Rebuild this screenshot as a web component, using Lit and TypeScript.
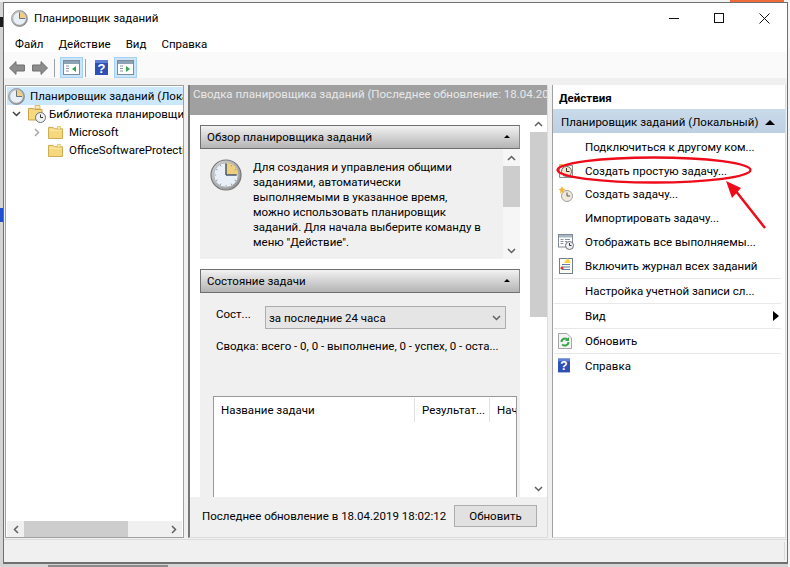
import { LitElement, html, css, svg } from "lit";
import { customElement } from "lit/decorators.js";

const ticks = [0, 30, 60, 90, 120, 150, 180, 210, 240, 270, 300, 330];
const clock = (s: number) => html`<svg width=${s} height=${s} viewBox="0 0 32 32" class="ic">
  <defs><linearGradient id="rim" x1="0" y1="0" x2="1" y2="1"><stop offset="0" stop-color="#d8d8d8"/><stop offset="1" stop-color="#8c8c8c"/></linearGradient></defs>
  <circle cx="16" cy="16" r="15" fill="url(#rim)" stroke="#767676" stroke-width="1.2"/>
  <circle cx="16" cy="16" r="12.200" fill="#e9eff6" stroke="#a8aeb4" stroke-width=".8"/>
  <path d="M16 16V3.800A12.200 12.200 0 0 1 28.200 16Z" fill="#efcf7f"/>
  ${s > 20 ? ticks.map((a) => svg`<path d="M16 4.500v1.600" transform="rotate(${a} 16 16)" stroke="#8a98a8" stroke-width=".8"/>`) : ""}
  <path d="M16 16V4.500M16 16H26.500" stroke="#44596f" stroke-width="1.500" fill="none"/>
</svg>`;

const folder = () => html`<svg width="15" height="13" viewBox="0 0 16 14" class="ic">
  <path d="M.5 1.500h5l1.500 1.500h8.500v10.500h-15z" fill="#f6d87f" stroke="#c9a548"/>
  <path d="M1.500 4.500h13" stroke="#fff0b8"/>
  <path d="M10 .5h3.500v3h-3.500z" fill="#fbe9ad" stroke="#d6b65c" stroke-width=".7"/>
</svg>`;

const arrow = (flip: boolean) => html`<svg width="16" height="14" viewBox="0 0 16 14" class="ic">
  <path d=${flip ? "M15.500 7L9 .6V4H.6v6H9v3.400z" : "M.5 7L7 .6V4h8.400v6H7v3.400z"} fill="#8d8d8d" stroke="#6e6e6e"/>
</svg>`;

const pane = (right: boolean) => html`<svg width="17" height="15" viewBox="0 0 17 15" class="ic">
  <rect x=".5" y=".5" width="16" height="14" fill="#fff" stroke="#7b8b99"/>
  <rect x="1" y="1" width="15" height="3" fill="#8da2b5"/>
  <path d="M3 6h3M3 8.500h3M3 11h3" stroke="#8794a0"/>
  <path d=${right ? "M9 6l4 3-4 3z" : "M13 6l-4 3 4 3z"} fill="#36a84a"/>
</svg>`;

const help = (w: number, h: number) => html`<svg width=${w} height=${h} viewBox="0 0 13 15" class="ic">
  <rect width="13" height="15" fill="#2f4fb5"/>
  <path d="M0 0h13v3H0z" fill="#5f7fd4"/>
  <text x="6.500" y="12.500" text-anchor="middle" font-family="Liberation Sans, sans-serif" font-weight="700" font-size="13" fill="#fff">?</text>
</svg>`;

const icFolderClock = html`<svg width="18" height="18" viewBox="0 0 18 18" class="ic">
  <path d="M.5 3.500h5l1 1h7.500v10.500H.5z" fill="#f6d87f" stroke="#c9a548"/>
  <path d="M7 .5h5v3.500H7z" fill="#fbe9ad" stroke="#c9a548" stroke-width=".7"/>
  <circle cx="12.500" cy="12.500" r="5" fill="#eef1f3" stroke="#6f6f6f"/>
  <path d="M12.500 9.500v3h2.500" stroke="#333" fill="none"/>
</svg>`;

const icSimple = html`<svg width="16" height="16" viewBox="0 0 16 16" class="ic">
  <path d="M1.500 2.500h13v12h-13z" fill="#f2f2f2" stroke="#8b8b8b"/>
  <circle cx="8.500" cy="8.500" r="5" fill="#f3e7c8" stroke="#6e6e6e"/>
  <path d="M8.500 5v3.500h3" stroke="#333" fill="none"/>
  <path d="M1 1h4v2H1z" fill="#eab54a"/>
</svg>`;

const icTask = html`<svg width="16" height="16" viewBox="0 0 16 16" class="ic">
  <circle cx="9" cy="10" r="5.500" fill="#f0eadb" stroke="#a0a0a0"/>
  <path d="M9 6.500V10h3" stroke="#555" fill="none"/>
  <path d="M4 0l1 2.500 2.500.5L5.500 4.800 6 7.500 4 6 2 7.500l.5-2.700L.5 3 3 2.500z" fill="#f2b632"/>
</svg>`;

const icRunning = html`<svg width="16" height="16" viewBox="0 0 16 16" class="ic">
  <rect x=".5" y=".5" width="14" height="12.500" fill="#fff" stroke="#7f8a96"/>
  <rect x="1" y="1" width="13" height="2.500" fill="#a9b7c5"/>
  <path d="M2.500 5.500h3M2.500 7.500h3M2.500 9.500h3M7 5.500h5M7 7.500h2" stroke="#8794a0"/>
  <circle cx="11.500" cy="11.500" r="4" fill="#eef1f3" stroke="#6f6f6f"/>
  <path d="M11.500 9v2.500h2" stroke="#333" fill="none"/>
</svg>`;

const icLog = html`<svg width="16" height="16" viewBox="0 0 16 16" class="ic">
  <rect x="1.500" y=".5" width="13" height="15" fill="#fdfdf3" stroke="#6f7f90"/>
  <path d="M4 6.500h8M4 9h8M4 11.500h8" stroke="#5b7db0"/>
  <path d="M9.500 0l3.500 5H6z" fill="#f7d23c"/>
  <circle cx="4" cy="10" r="1.600" fill="#d23a3a"/>
</svg>`;

const icRefresh = html`<svg width="14" height="16" viewBox="0 0 14 16" class="ic">
  <path d="M.5.5h8.500l4.500 4.500v10.500H.5z" fill="#f4f4f4" stroke="#a5a5a5"/>
  <path d="M3.500 9a3.600 3.600 0 0 1 6.300-2.300" stroke="#3aa54a" stroke-width="2" fill="none"/>
  <path d="M10.500 9a3.600 3.600 0 0 1-6.300 2.300" stroke="#3aa54a" stroke-width="2" fill="none"/>
  <path d="M11 4v4H7z" fill="#3aa54a"/>
</svg>`;

const chevDown = html`<svg width="9" height="6" viewBox="0 0 9 6" class="ic"><path d="M1 1l3.500 3.500L8 1" fill="none" stroke="#606060" stroke-width="1.500"/></svg>`;
const chevDownDark = html`<svg width="9" height="6" viewBox="0 0 9 6" class="ic"><path d="M1 1l3.500 3.500L8 1" fill="none" stroke="#404040" stroke-width="1.500"/></svg>`;
const chevUp = html`<svg width="9" height="6" viewBox="0 0 9 6" class="ic"><path d="M1 5l3.500-3.500L8 5" fill="none" stroke="#606060" stroke-width="1.500"/></svg>`;
const chevL = html`<svg width="6" height="9" viewBox="0 0 6 9" class="ic"><path d="M5 1L1.500 4.500 5 8" fill="none" stroke="#606060" stroke-width="1.500"/></svg>`;
const chevR = html`<svg width="6" height="9" viewBox="0 0 6 9" class="ic"><path d="M1 1l3.500 3.500L1 8" fill="none" stroke="#a8a8a8" stroke-width="1.500"/></svg>`;
const chevRDark = html`<svg width="6" height="9" viewBox="0 0 6 9" class="ic"><path d="M1 1l3.500 3.500L1 8" fill="none" stroke="#606060" stroke-width="1.500"/></svg>`;

const scrollV = (thumbH: number, cls: string) => html`<div class="vbar ${cls}">
  <div class="sb-btn">${chevUp}</div>
  <div class="vtrack"><div class="vthumb" style="height:${thumbH}px"></div></div>
  <div class="sb-btn">${chevDown}</div>
</div>`;

const actions: [unknown, string, boolean, boolean][] = [
  [null, "Подключиться к другому ком...", false, false],
  [icSimple, "Создать простую задачу...", false, false],
  [icTask, "Создать задачу...", false, false],
  [null, "Импортировать задачу...", false, false],
  [icRunning, "Отображать все выполняемы...", false, false],
  [icLog, "Включить журнал всех заданий", false, false],
  [null, "Настройка учетной записи сл...", true, false],
  [null, "Вид", true, true],
  [icRefresh, "Обновить", true, false],
  [help(12, 15), "Справка", true, false],
];

@customElement("app-root")
export class AppRoot extends LitElement {
  static styles = css`
    :host { display: block; width: 790px; height: 567px; position: relative; overflow: hidden; background: #d4d4d4;
      font: 11.500px/16px Roboto, "Noto Sans", sans-serif; color: #000; }
    * { box-sizing: border-box; }
    .ic { display: block; flex: none; }
    .desk { position: absolute; }
    .d1 { left: 0; top: 17px; width: 3px; height: 10px; background: #1a1a1a; }
    .d2 { left: 0; top: 208px; width: 3px; height: 14px; background: #2050d0; }
    .d3 { left: 730px; top: 0; width: 54px; height: 2px; background: #ef6a3a; }
    .d4 { left: 48px; top: 565px; width: 120px; height: 2px; background: #8a8a8a; }
    .d5 { left: 0; top: 0; width: 790px; height: 2px; background: #f2f2f2; }
    .d6 { left: 788px; top: 0; width: 2px; height: 567px; background: #f4f4f4; }
    .window { position: absolute; left: 3px; top: 2px; width: 785px; height: 562px; background: #fff;
      border: 1px solid #707070; border-width: 1px 1px 2px 1px; display: flex; flex-direction: column; }
    .title { height: 30px; flex: none; display: flex; align-items: center; padding-left: 7px; gap: 6px; }
    .title .name { flex: 1; }
    .wc { display: flex; padding-right: 17px; gap: 34px; align-items: center; }
    .wc svg { display: block; }
    .menu { height: 19px; flex: none; display: flex; gap: 15px; padding: 2px 0 0 11px; align-items: center; }
    .toolbar { height: 26px; flex: none; display: flex; align-items: center; padding: 5px 0 0 5px; background: #fafafa; }
    .tb { display: flex; align-items: center; justify-content: center; }
    .tbtn { width: 23px; height: 21px; background: #cce4f7; border: 1px solid #a3d2f5; }
    .tsep { width: 1px; height: 18px; background: #a0a0a0; }
    .m7 { margin-left: 7px; } .m6 { margin-left: 6px; } .m5 { margin-left: 5px; } .m2 { margin-left: 2px; } .m9 { margin-left: 9px; }
    .content { flex: 1; background: #f0f0f0; padding: 7px 0 1px 1px; display: flex; gap: 4px; min-height: 0; }
    .status { height: 23px; flex: none; background: #f0f0f0; border-top: 1px solid #dcdcdc; display: flex; justify-content: flex-end; padding: 2px 2px 2px 0; }
    .grip { width: 1px; background: #dadada; }
    .tree { width: 179px; flex: none; background: #fff; border: 1px solid #a0a0a0; display: flex; flex-direction: column; padding: 1px 0 0 1px; }
    .rows { flex: 1; overflow: hidden; }
    .trow { height: 18px; display: flex; align-items: center; white-space: nowrap; overflow: hidden; width: 176px; }
    .trow > * { flex: none; }
    .trow.sel { background: #cce8ff; padding-left: 1px; gap: 5px; }
    .t2 { padding-left: 5px; }
    .t3 { padding-left: 27px; }
    .sp-a { width: 7px; } .sp-b { width: 8px; } .sp-c { width: 14px; }
    .tl { margin-left: 3px; } .tl2 { margin-left: 6px; }
    .hbar { height: 16px; background: #f0f0f0; display: flex; align-items: center; flex: none; margin-right: 1px; }
    .hbtn { width: 17px; display: flex; justify-content: center; flex: none; }
    .hthumb { width: 104px; height: 16px; background: #cdcdcd; flex: none; }
    .grow { flex: 1; }
    .mid { width: 360px; flex: none; display: flex; flex-direction: column; background: #fff; border-left: 2px solid #777; border-bottom: 1px solid #dcdcdc; border-right: 1px solid #dcdcdc; }
    .mhead { height: 30px; flex: none; background: #a0a0a0; color: #e8e8e8; padding: 1px 0 0 3px; white-space: nowrap; overflow: hidden; }
    .mbody { height: 382px; flex: none; display: flex; overflow: hidden; }
    .scroll { flex: 1; padding: 10px 10px 0 10px; overflow: hidden; }
    .vbar { width: 17px; flex: none; display: flex; flex-direction: column; background: #fff; }
    .sb-btn { height: 17px; flex: none; display: flex; align-items: center; justify-content: center; }
    .vtrack { flex: 1; }
    .vthumb { background: #cdcdcd; }
    .inner { background: #f6f6f6; height: 110px; }
    .shead { height: 24px; display: flex; align-items: center; justify-content: space-between; padding: 0 7px 1px 6px; border: 1px solid #6f6f6f; border-right-color: #8a8a8a;
      background: linear-gradient(#f2f2f2, #b4b4b4); }
    .caret { width: 0; height: 0; border: 3px solid transparent; border-bottom: 3px solid #000; border-top: 0; margin-right: 2px; }
    .sbody { background: #f0f0f0; }
    .s1 { height: 110px; display: flex; margin-bottom: 10px; }
    .s1 .main { flex: 1; display: flex; padding: 10px 0 0 10px; gap: 11px; }
    .lines { line-height: 15px; white-space: nowrap; margin-top: 1px; }
    .s2 { height: 204px; padding: 13px 3px 0 13px; overflow: hidden; }
    .srow { display: flex; align-items: flex-start; padding-left: 3px; }
    .slabel { width: 49px; flex: none; }
    .combo { width: 241px; height: 23px; background: #e5e5e5; border: 1px solid #adadad; display: flex; align-items: center; justify-content: space-between; padding: 0 4px 0 3px; }
    .sum { margin-top: 9px; padding-left: 3px; white-space: nowrap; }
    .table { margin-top: 42px; width: 304px; height: 102px; background: #fff; border: 1px solid #999; border-bottom: 0; display: flex; overflow: hidden; }
    .col { height: 24px; margin-top: 1px; display: flex; align-items: center; padding-left: 7px; border-right: 1px solid #e0e0e0; white-space: nowrap; flex: none; overflow: hidden; }
    .c1 { width: 201px; } .c2 { width: 75px; } .c3 { width: 26px; border: 0; }
    .mfoot { flex: 1; background: #f0f0f0; display: flex; align-items: center; justify-content: space-between; padding: 0 10px 2px 12px; white-space: nowrap; }
    .btn { width: 83px; height: 22px; flex: none; background: #e1e1e1; border: 1px solid #adadad; display: flex; align-items: center; justify-content: center; padding-bottom: 1px; }
    .right { flex: 1; background: #fff; margin-right: 1px; display: flex; flex-direction: column; border-left: 1px solid #a0a0a0; border-bottom: 1px solid #dcdcdc; border-right: 1px solid #dcdcdc; }
    .rhead { height: 24px; flex: none; font-weight: 700; padding: 5px 0 0 6px; }
    .rblue { height: 24px; flex: none; background: linear-gradient(#c9daea, #bdd0e3); display: flex; align-items: center; justify-content: space-between; padding: 2px 10px 0 8px; margin-bottom: 2px; white-space: nowrap; }
    .up { width: 0; height: 0; border: 5px solid transparent; border-bottom: 5px solid #000; border-top: 0; }
    .act { height: 23.800px; display: flex; align-items: center; padding-left: 4px; margin-left: 1px; margin-right: 4px; white-space: nowrap; }
    .act.sep { height: 25px; border-top: 1px solid #e8e8e8; }
    .act .slot { width: 27px; flex: none; }
    .act .txt { flex: 1; }
    .rt { width: 0; height: 0; border: 5px solid transparent; border-left: 6px solid #000; border-right: 0; margin-right: 2px; }
    .anno { position: absolute; left: 0; top: 0; pointer-events: none; }
  `;

  render() {
    return html`
      <div class="desk d5"></div><div class="desk d6"></div>
      <div class="desk d1"></div><div class="desk d2"></div><div class="desk d3"></div><div class="desk d4"></div>
      <div class="window">
        <div class="title">
          ${clock(17)}<div class="name">Планировщик заданий</div>
          <div class="wc">
            <svg width="11" height="11" viewBox="0 0 11 11"><path d="M0 5.500h10" stroke="#111"/></svg>
            <svg width="11" height="11" viewBox="0 0 11 11"><rect x=".5" y=".5" width="9" height="9" fill="none" stroke="#111"/></svg>
            <svg width="11" height="11" viewBox="0 0 11 11"><path d="M.5.500l10 10M10.500.5l-10 10" stroke="#111"/></svg>
          </div>
        </div>
        <div class="menu"><span>Файл</span><span>Действие</span><span>Вид</span><span>Справка</span></div>
        <div class="toolbar">
          <div class="tb">${arrow(false)}</div>
          <div class="tb m7">${arrow(true)}</div>
          <div class="tsep m6"></div>
          <div class="tb tbtn m5">${pane(false)}</div>
          <div class="tsep m2"></div>
          <div class="tb m9">${help(13, 15)}</div>
          <div class="tb tbtn m6">${pane(true)}</div>
        </div>
        <div class="content">
          <div class="tree">
            <div class="rows">
              <div class="trow sel">${clock(17)}<span>Планировщик заданий (Локальный)</span></div>
              <div class="trow t2">${chevDownDark}<span class="sp-a"></span>${icFolderClock}<span class="tl">Библиотека планировщика заданий</span></div>
              <div class="trow t3">${chevR}<span class="sp-b"></span>${folder()}<span class="tl2">Microsoft</span></div>
              <div class="trow t3"><span class="sp-c"></span>${folder()}<span class="tl2">OfficeSoftwareProtectionPlatform</span></div>
            </div>
            <div class="hbar">
              <div class="hbtn">${chevL}</div><div class="hthumb"></div><div class="grow"></div><div class="hbtn">${chevRDark}</div>
            </div>
          </div>
          <div class="mid">
            <div class="mhead">Сводка планировщика заданий (Последнее обновление: 18.04.2019 18:02:12)</div>
            <div class="mbody">
              <div class="scroll">
                <div class="shead"><span>Обзор планировщика заданий</span><div class="caret"></div></div>
                <div class="sbody s1">
                  <div class="main">
                    ${clock(32)}
                    <div class="lines">Для создания и управления общими<br>заданиями, автоматически<br>выполняемыми в указанное время,<br>можно использовать планировщик<br>заданий. Для начала выберите команду в<br>меню "Действие".</div>
                  </div>
                  ${scrollV(41, "inner")}
                </div>
                <div class="shead"><span>Состояние задачи</span><div class="caret"></div></div>
                <div class="sbody s2">
                  <div class="srow"><span class="slabel">Сост...</span>
                    <div class="combo"><span>за последние 24 часа</span>${chevDown}</div>
                  </div>
                  <div class="sum">Сводка: всего - 0, 0 - выполнение, 0 - успех, 0 - оста...</div>
                  <div class="table">
                    <div class="col c1">Название задачи</div>
                    <div class="col c2">Результат...</div>
                    <div class="col c3">Нач</div>
                  </div>
                </div>
              </div>
              ${scrollV(185, "")}
            </div>
            <div class="mfoot"><span>Последнее обновление в 18.04.2019 18:02:12</span><div class="btn">Обновить</div></div>
          </div>
          <div class="right">
            <div class="rhead">Действия</div>
            <div class="rblue"><span>Планировщик заданий (Локальный)</span><div class="up"></div></div>
            ${actions.map(([ic, t, sep, sub]) => html`<div class="act ${sep ? "sep" : ""}"><div class="slot">${ic}</div><div class="txt">${t}</div>${sub ? html`<div class="rt"></div>` : ""}</div>`)}
          </div>
        </div>
        <div class="status"><div class="grip"></div></div>
      </div>
      <svg class="anno" width="790" height="567" viewBox="0 0 790 567">
        ${svg`<ellipse cx="654" cy="170" rx="96.500" ry="12.500" fill="none" stroke="#ee0b1a" stroke-width="2.300"/>
        <path d="M765 228L735 190" stroke="#ee0b1a" stroke-width="2.500"/>
        <path d="M726 181L741 188L732 198Z" fill="#ee0b1a"/>`}
      </svg>
    `;
  }
}
